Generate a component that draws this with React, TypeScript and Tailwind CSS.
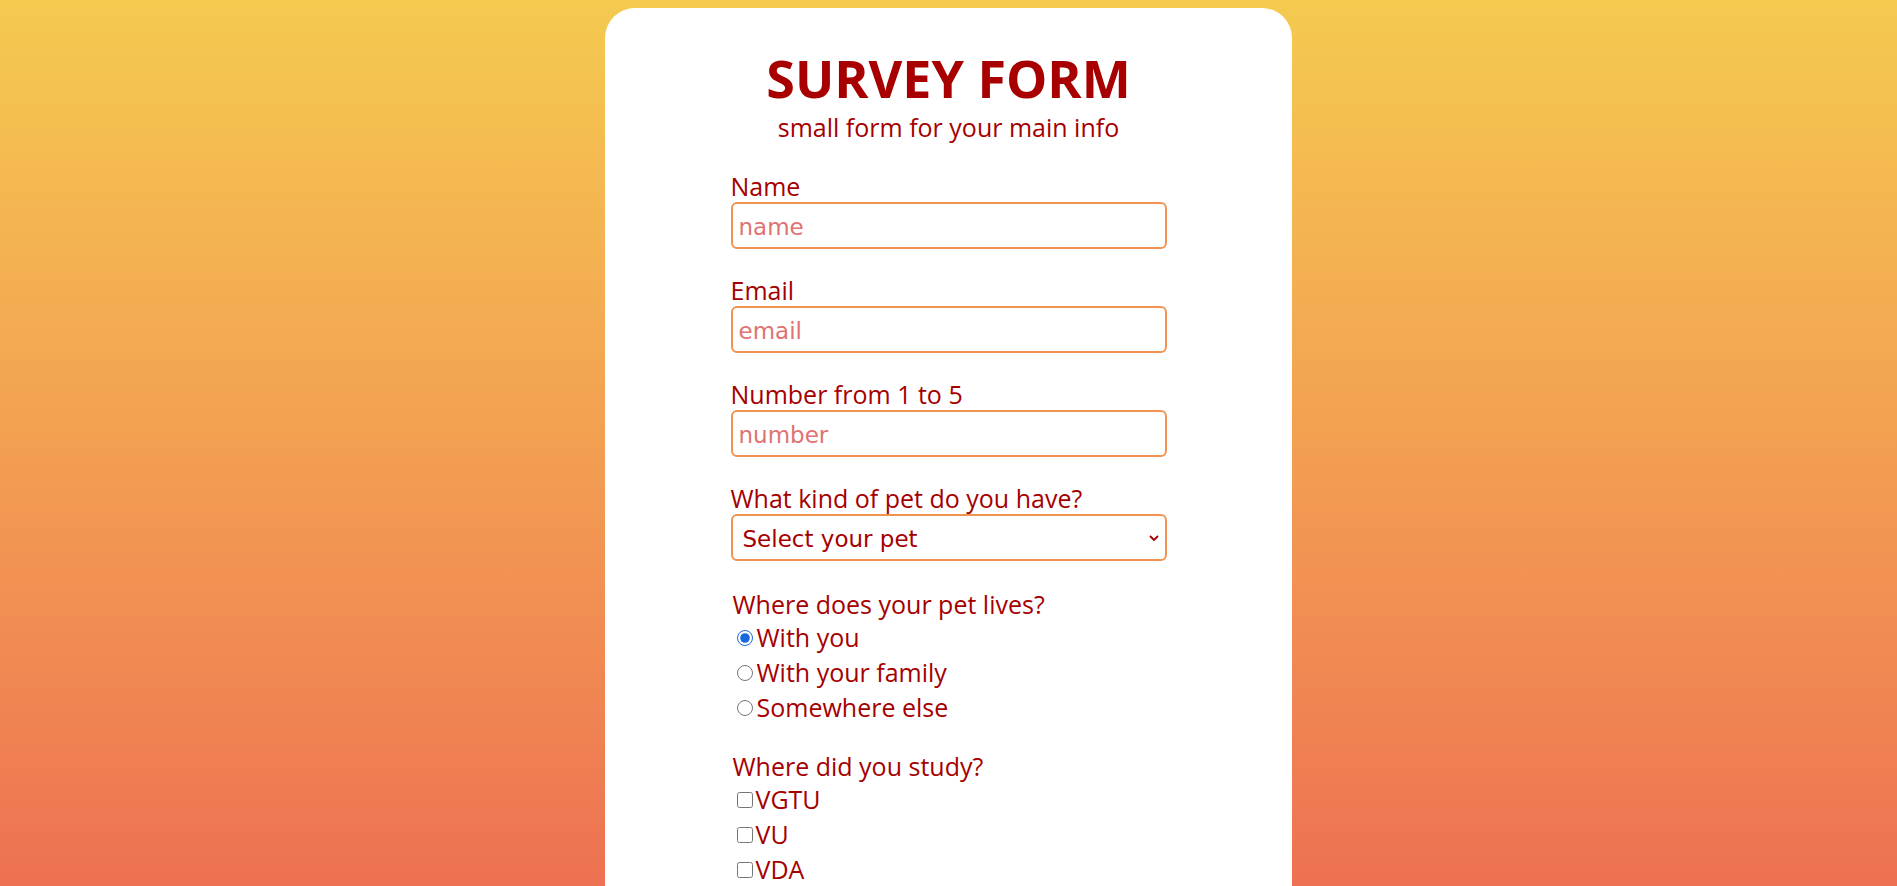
import { useState } from "react";

const pets = ["Dog", "Cat", "Fish", "Parrot"];
const places = ["With you", "With your family", "Somewhere else"];
const schools = ["VGTU", "VU", "VDA"];

function Field({ label, placeholder, type = "text" }: { label: string; placeholder: string; type?: string }) {
  return (
    <div className="mb-[27px]">
      <label className="mb-[2px] block h-[28px] text-[25px] leading-[28px]">{label}</label>
      <input
        type={type}
        placeholder={placeholder}
        className="block h-[47px] w-full rounded-[6px] border-2 border-[#f0944f] bg-white px-[6px] pt-[2px] font-['DejaVu_Sans',sans-serif] text-[23px] text-[#a50000] outline-none placeholder:text-[#e07272]"
      />
    </div>
  );
}

export default function App() {
  const [place, setPlace] = useState("With you");

  return (
    <div className="h-screen overflow-hidden bg-linear-to-b from-[#f4ca4f] to-[#ed7152] font-['Open_Sans',sans-serif] text-[#a50000]">
      <div className="mx-auto mt-[8px] w-[687px] rounded-[30px] bg-white pt-[42px] pb-[200px]">
        <h1 className="text-center text-[52px] font-bold leading-[56px] text-[#a80000]">SURVEY FORM</h1>
        <p className="mt-[5px] text-center text-[25px] leading-[32px]">small form for your main info</p>

        <form className="mx-auto mt-[29px] w-[436px]">
          <Field label="Name" placeholder="name" />
          <Field label="Email" placeholder="email" type="email" />
          <Field label="Number from 1 to 5" placeholder="number" type="number" />

          <div className="mb-[29px]">
            <label className="mb-[2px] block h-[28px] text-[25px] leading-[28px]">What kind of pet do you have?</label>
            <div className="relative">
              <select
                defaultValue=""
                className="block h-[47px] w-full appearance-none rounded-[6px] border-2 border-[#f0944f] bg-white pt-[3px] pl-[10px] font-['DejaVu_Sans',sans-serif] text-[23px] text-[#a50000] outline-none"
              >
                <option value="" disabled>
                  Select your pet
                </option>
                {pets.map((p) => (
                  <option key={p}>{p}</option>
                ))}
              </select>
              <svg
                className="pointer-events-none absolute top-1/2 right-[8px] h-[6px] w-[10px] -translate-y-1/2"
                viewBox="0 0 10 6"
                fill="none"
                stroke="#a50000"
                strokeWidth={1.8}
              >
                <path d="M1 1l4 4 4-4" />
              </svg>
            </div>
          </div>

          <div className="ml-[2px]">
            <p className="mb-[2px] h-[28px] text-[25px] leading-[28px]">Where does your pet lives?</p>
            {places.map((p) => (
              <label key={p} className="flex h-[35px] items-center text-[25px] leading-[35px]">
                <input
                  type="radio"
                  name="place"
                  checked={place === p}
                  onChange={() => setPlace(p)}
                  className="m-0 mr-[4px] ml-[4px] h-[16px] w-[16px] accent-[#1668dc]"
                />
                {p}
              </label>
            ))}
          </div>

          <div className="mt-[27px] ml-[2px]">
            <p className="mb-[2px] h-[28px] text-[25px] leading-[28px]">Where did you study?</p>
            {schools.map((s) => (
              <label key={s} className="flex h-[35px] items-center text-[25px] leading-[35px]">
                <input type="checkbox" className="m-0 mr-[3px] ml-[4px] h-[16px] w-[16px]" />
                {s}
              </label>
            ))}
          </div>
        </form>
      </div>
    </div>
  );
}
